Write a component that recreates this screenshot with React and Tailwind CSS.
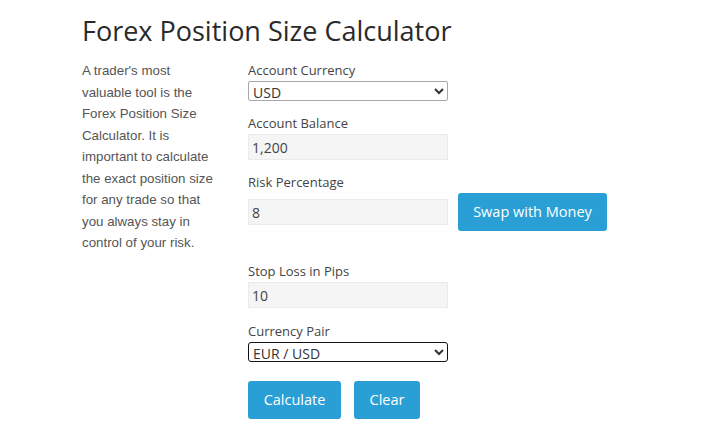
import React, { useState } from "react";

// Forex position size calculator form
const openSans = { fontFamily: '"Open Sans", "Noto Sans", sans-serif' };

function Field({ label, children, className = "" }) {
  return (
    <div className={className}>
      <label className="block text-[13px] leading-[20px] text-[#444]">{label}</label>
      {children}
    </div>
  );
}

function TextInput({ value, onChange }) {
  return (
    <input
      value={value}
      onChange={(e) => onChange(e.target.value)}
      className="block w-[200px] h-[26px] px-[3px] bg-[#f5f5f5] border border-[#ebebeb] text-[14px] text-[#444] outline-none"
      style={openSans}
    />
  );
}

export default function App() {
  const [currency, setCurrency] = useState("USD");
  const [balance, setBalance] = useState("1,200");
  const [risk, setRisk] = useState("8");
  const [stop, setStop] = useState("10");
  const [pair, setPair] = useState("EUR / USD");

  return (
    <div className="w-[720px] h-[432px] bg-white overflow-hidden" style={openSans}>
      <h1 className="pl-[82px] pt-[11px] text-[27px] leading-[40px] text-[#2a2a2a]">
        Forex Position Size Calculator
      </h1>

      <div className="flex pl-[82px] mt-[9px]">
        <p
          className="w-[134px] text-[13.3px] leading-[21.5px] text-[#555]"
          style={{ fontFamily: '"Liberation Sans", Arial, sans-serif' }}
        >
          A trader's most valuable tool is the Forex Position Size Calculator. It is important to
          calculate the exact position size for any trade so that you always stay in control of
          your risk.
        </p>

        <div className="ml-[32px]">
          <Field label="Account Currency">
            <select
              value={currency}
              onChange={(e) => setCurrency(e.target.value)}
              className="mt-[1px] block w-[200px] h-[20px] border border-[#a9a9a9] rounded-[2px] text-[14px] leading-[18px] text-[#333] bg-white"
              style={openSans}
            >
              <option>USD</option>
              <option>EUR</option>
              <option>GBP</option>
            </select>
          </Field>

          <Field label="Account Balance" className="mt-[12px]">
            <div className="mt-[1px]">
              <TextInput value={balance} onChange={setBalance} />
            </div>
          </Field>

          <Field label="Risk Percentage" className="mt-[12px]">
            <div className="mt-[1px] flex items-center gap-[10px]">
              <TextInput value={risk} onChange={setRisk} />
              <button className="h-[38px] w-[149px] rounded-[3px] bg-[#2a9fd6] text-white text-[14.5px]">
                Swap with Money
              </button>
            </div>
          </Field>

          <Field label="Stop Loss in Pips" className="mt-[30px]">
            <div className="mt-[1px]">
              <TextInput value={stop} onChange={setStop} />
            </div>
          </Field>

          <Field label="Currency Pair" className="mt-[13px]">
            <select
              value={pair}
              onChange={(e) => setPair(e.target.value)}
              className="mt-[1px] block w-[200px] h-[20px] border border-[#111] rounded-[3px] text-[14px] leading-[18px] text-[#333] bg-white"
              style={openSans}
            >
              <option>EUR / USD</option>
              <option>GBP / USD</option>
              <option>USD / JPY</option>
            </select>
          </Field>

          <div className="flex gap-[13px] mt-[19px]">
            <button className="h-[38px] w-[93px] rounded-[3px] bg-[#2a9fd6] text-white text-[14.5px]">
              Calculate
            </button>
            <button className="h-[38px] w-[66px] rounded-[3px] bg-[#2a9fd6] text-white text-[14.5px]">
              Clear
            </button>
          </div>
        </div>
      </div>
    </div>
  );
}
